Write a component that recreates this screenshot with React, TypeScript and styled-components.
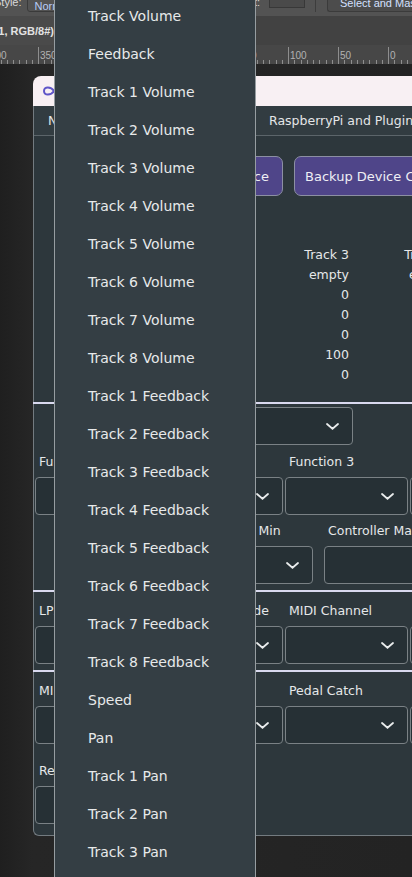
import React from 'react';
import styled, { createGlobalStyle } from 'styled-components';

const GlobalStyle = createGlobalStyle`
  html, body {
    margin: 0;
    padding: 0;
    background: #232323;
  }
  body {
    font-family: "DejaVu Sans", Verdana, sans-serif;
  }
  * {
    box-sizing: border-box;
  }
`;

const menuItems = [
  'Track Volume',
  'Feedback',
  ...Array.from({ length: 8 }, (_, i) => `Track ${i + 1} Volume`),
  ...Array.from({ length: 8 }, (_, i) => `Track ${i + 1} Feedback`),
  'Speed',
  'Pan',
  ...Array.from({ length: 8 }, (_, i) => `Track ${i + 1} Pan`),
];

const tracks = [1, 2, 3, 4].map((n) => ({
  name: `Track ${n}`,
  values: ['empty', '0', '0', '0', '100', '0'],
}));

function Chevron() {
  return (
    <svg width="13" height="7" viewBox="0 0 13 7">
      <path d="M1 1 L6.5 5.8 L12 1" fill="none" stroke="#e9ebec" strokeWidth="1.8" strokeLinecap="round" />
    </svg>
  );
}

function Infinity() {
  return (
    <svg width="26" height="12" viewBox="0 0 26 12">
      <path
        d="M13 6 C10 1.5 3 1 3 6 C3 11 10 10.5 13 6 C16 1.5 23 1 23 6 C23 11 16 10.5 13 6 Z"
        fill="none"
        stroke="#5f55c8"
        strokeWidth="2"
      />
    </svg>
  );
}

function RulerMarks() {
  const majors = Array.from({ length: 9 }, (_, k) => ({ x: 388 - 50 * k, label: 50 * k }));
  const minors: number[] = [];
  for (let x = 388 - 50 * 8; x <= 412; x += 6.25) minors.push(x);
  return (
    <svg width="412" height="19" viewBox="0 0 412 19">
      {minors.map((x) => (
        <line key={x} x1={Math.round(x) + 0.5} x2={Math.round(x) + 0.5} y1={15} y2={19} stroke="#8e8e8e" />
      ))}
      {majors.map((m) => (
        <g key={m.label}>
          <line x1={m.x + 0.5} x2={m.x + 0.5} y1={2} y2={19} stroke="#8e8e8e" />
          <text x={m.x + 2} y={14} fontSize="10" fill="#b2b2b2" fontFamily="Liberation Sans, Arial, sans-serif">
            {m.label}
          </text>
        </g>
      ))}
    </svg>
  );
}

function SelectBox({ width }: { width?: number }) {
  return (
    <Select $width={width}>
      <Chevron />
    </Select>
  );
}

function Field({ label }: { label?: string }) {
  if (!label) return <div />;
  return (
    <FieldWrap>
      <FieldLabel>{label}</FieldLabel>
      <SelectBox />
    </FieldWrap>
  );
}

export default function App() {
  return (
    <Screen>
      <GlobalStyle />
      <OptionsBar>
        <OptLabel>Style:</OptLabel>
        <OptField>Normal</OptField>
        <Spacer />
        <OptLabel>Height:</OptLabel>
        <OptSmallBox />
        <OptDivider />
        <OptButton>Select and Mask...</OptButton>
      </OptionsBar>

      <DocTabs>
        <DocTab>Untitled-1 @ 66.7% (Layer 1, RGB/8#)</DocTab>
      </DocTabs>

      <RulerBar>
        <RulerMarks />
      </RulerBar>

      <Canvas>
        <Window>
          <TitleBar>
            <Infinity />
          </TitleBar>
          <Body>
            <Tabs>
              <Tab $width={221}>Network</Tab>
              <Tab>RaspberryPi and Plugins</Tab>
            </Tabs>

            <ButtonRow>
              <ActionButton $width={123}>Restore Device</ActionButton>
              <ActionButton>Backup Device Config</ActionButton>
            </ButtonRow>

            <TrackTable>
              {tracks.map((t) => (
                <TrackColumn key={t.name}>
                  <Cell>{t.name}</Cell>
                  {t.values.map((v, i) => (
                    <Cell key={i}>{v}</Cell>
                  ))}
                </TrackColumn>
              ))}
            </TrackTable>

            <Divider $top={18} />
            <PresetRow>
              <SelectBox width={193} />
            </PresetRow>

            <FieldRow $cols="repeat(4, 123px)" $gap={2} $indent={1} $top={10}>
              <Field label="Function 1" />
              <Field label="Function 2" />
              <Field label="Function 3" />
              <Field label="Function 4" />
            </FieldRow>
            <FieldRow $cols="114px 124px 124px" $gap={11} $indent={30} $top={9}>
              <Field label="Controller" />
              <Field label="Controller Min" />
              <Field label="Controller Max" />
            </FieldRow>

            <Divider $top={6} />
            <FieldRow $cols="repeat(4, 123px)" $gap={2} $indent={1} $top={12}>
              <Field label="LP2 Mode" />
              <Field label="Footswitch Mode" />
              <Field label="MIDI Channel" />
              <Field label="MIDI Clock" />
            </FieldRow>

            <Divider $top={6} />
            <FieldRow $cols="repeat(4, 123px)" $gap={2} $indent={1} $top={12}>
              <Field label="MIDI In" />
              <Field label="Pedal" />
              <Field label="Pedal Catch" />
              <Field label="Pedal Curve" />
            </FieldRow>
            <FieldRow $cols="repeat(4, 123px)" $gap={2} $indent={1} $top={20}>
              <Field label="Reverse" />
            </FieldRow>
          </Body>
        </Window>
      </Canvas>

      <Menu>
        <MenuList>
          {menuItems.map((item) => (
            <MenuItem key={item}>{item}</MenuItem>
          ))}
        </MenuList>
      </Menu>
    </Screen>
  );
}

const Screen = styled.div`
  position: relative;
  width: 412px;
  height: 877px;
  overflow: hidden;
  display: flex;
  flex-direction: column;
  background: #232323;
`;

/* photoshop chrome behind the app window */
const OptionsBar = styled.div`
  display: flex;
  align-items: flex-start;
  height: 16px;
  flex-shrink: 0;
  overflow: hidden;
  background: #535353;
  font-family: "Liberation Sans", Arial, sans-serif;
  font-size: 11px;
  color: #d8d8d8;
`;

const OptLabel = styled.span`
  margin-top: -4px;
  line-height: 12px;
  &:first-child {
    margin-left: -6px;
  }
`;

const OptField = styled.div`
  margin: -6px 0 0 5px;
  width: 120px;
  height: 18px;
  padding: 5px 0 0 7px;
  border: 1px solid #3a3a3a;
  border-radius: 3px;
  color: #b9cdf7;
  line-height: 12px;
`;

const Spacer = styled.div`
  flex: 1;
`;

const OptSmallBox = styled.div`
  margin: -6px 0 0 9px;
  width: 36px;
  height: 14px;
  border: 1px solid #383838;
  background: #4a4a4a;
`;

const OptDivider = styled.div`
  margin: 0 11px 0 10px;
  width: 1px;
  height: 12px;
  background: #3d3d3d;
`;

const OptButton = styled.div`
  flex: 0 0 85px;
  margin-top: -6px;
  height: 18px;
  padding: 2px 0 0 12px;
  overflow: hidden;
  white-space: nowrap;
  border: 1px solid #3b3b3b;
  border-right: none;
  border-radius: 3px 0 0 3px;
  background: #4c4c4c;
  color: #d4e0ff;
  line-height: 12px;
`;

const DocTabs = styled.div`
  display: flex;
  height: 29px;
  flex-shrink: 0;
  background: #424242;
`;

const DocTab = styled.div`
  display: flex;
  justify-content: flex-end;
  align-items: center;
  width: 120px;
  padding-right: 66px;
  overflow: hidden;
  white-space: nowrap;
  background: #4a4a4a;
  font-family: "Liberation Sans", Arial, sans-serif;
  font-weight: bold;
  font-size: 11px;
  color: #e2e2e2;
`;

const RulerBar = styled.div`
  height: 19px;
  flex-shrink: 0;
  background: #474747;
  svg {
    display: block;
  }
`;

const Canvas = styled.div`
  flex: 1;
  padding: 12px 0 0 33px;
  background: linear-gradient(90deg, #1f1f1f 0%, #262626 8%, #232323 100%);
`;

/* the app window */
const Window = styled.div`
  width: 430px;
  display: flex;
  flex-direction: column;
`;

const TitleBar = styled.div`
  display: flex;
  align-items: center;
  height: 30px;
  padding-left: 8px;
  background: #f8f0f3;
  border-top-left-radius: 8px;
`;

const Body = styled.div`
  display: flex;
  flex-direction: column;
  padding-bottom: 11px;
  background: #2d373c;
  border-left: 1px solid #737b80;
  border-bottom: 1px solid #737b80;
  border-bottom-left-radius: 6px;
  color: #e6e8e9;
  font-size: 12.5px;
`;

const Tabs = styled.div`
  display: flex;
  height: 30px;
  background: #323c41;
  border-bottom: 1px solid #5c656a;
`;

const Tab = styled.div<{ $width?: number }>`
  flex: 0 0 ${(p) => (p.$width ? `${p.$width}px` : 'auto')};
  padding: 7px 14px 0;
  white-space: nowrap;
  font-size: 12.5px;
  color: #e4e6e7;
`;

const ButtonRow = styled.div`
  display: flex;
  gap: 11px;
  margin-top: 20px;
  padding-left: 126px;
`;

const ActionButton = styled.div<{ $width?: number }>`
  flex: 0 0 ${(p) => (p.$width ? `${p.$width}px` : 'auto')};
  display: flex;
  align-items: center;
  height: 40px;
  padding: 0 10px;
  white-space: nowrap;
  background: #4f4589;
  border: 1px solid #8c8fa3;
  border-radius: 7px;
  font-size: 13px;
  color: #eeeef4;
`;

const TrackTable = styled.div`
  display: grid;
  grid-template-columns: repeat(4, 100px);
  margin-top: 48px;
  padding-left: 15px;
`;

const TrackColumn = styled.div`
  display: flex;
  flex-direction: column;
  align-items: flex-end;
`;

const Cell = styled.div`
  height: 20px;
  line-height: 21px;
  white-space: nowrap;
`;

const Divider = styled.div<{ $top: number }>`
  height: 2px;
  margin: ${(p) => p.$top}px 0 0 -1px;
  background: #d9d9ef;
`;

const PresetRow = styled.div`
  display: flex;
  margin-top: 3px;
  padding-left: 126px;
`;

const FieldRow = styled.div<{ $cols: string; $gap: number; $indent: number; $top: number }>`
  display: grid;
  grid-template-columns: ${(p) => p.$cols};
  column-gap: ${(p) => p.$gap}px;
  margin-top: ${(p) => p.$top}px;
  padding-left: ${(p) => p.$indent}px;
`;

const FieldWrap = styled.div`
  display: flex;
  flex-direction: column;
  min-width: 0;
`;

const FieldLabel = styled.div`
  height: 15px;
  line-height: 14px;
  margin-bottom: 7px;
  padding-left: 4px;
  white-space: nowrap;
`;

const Select = styled.div<{ $width?: number }>`
  display: flex;
  align-items: center;
  justify-content: flex-end;
  width: ${(p) => (p.$width ? `${p.$width}px` : '100%')};
  height: 38px;
  padding-right: 13px;
  background: #263035;
  border: 1px solid #7a8185;
  border-radius: 4px;
  svg {
    display: block;
  }
`;

/* open dropdown list floating over the window */
const Menu = styled.div`
  position: absolute;
  top: 0;
  bottom: 0;
  left: 54px;
  width: 202px;
  overflow: hidden;
  background: #343e44;
  border-left: 1px solid #969da1;
  border-right: 1px solid #969da1;
`;

const MenuList = styled.div`
  display: flex;
  flex-direction: column;
  margin-top: -3px;
`;

const MenuItem = styled.div`
  flex-shrink: 0;
  height: 38px;
  line-height: 38px;
  padding-left: 33px;
  white-space: nowrap;
  font-size: 14px;
  color: #e7e9ea;
`;
